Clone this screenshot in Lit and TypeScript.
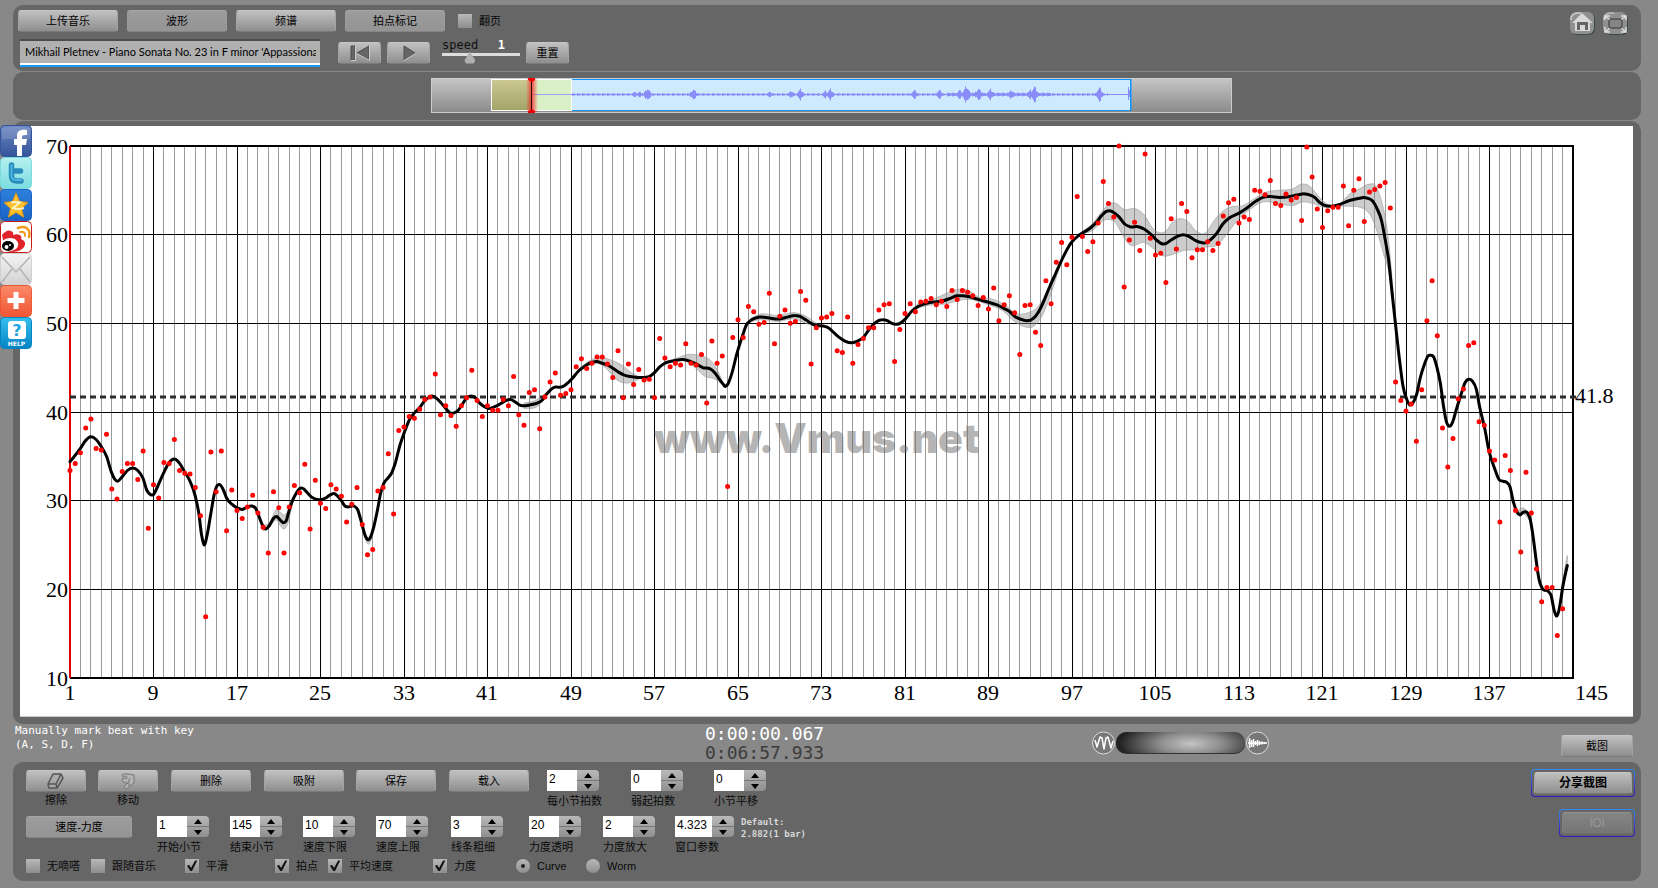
import { LitElement, html, svg, css, nothing } from "lit";
import { customElement, property, state } from "lit/decorators.js";
import { classMap } from "lit/directives/class-map.js";

// Tempo of every half bar, in tenths of BPM.
const BEATS = [
  334, 342, 354, 382, 392, 359, 357, 375, 313, 302, 333, 342, 342, 324, 356, 269, 318, 303, 343, 342,
  369, 334, 331, 330, 315, 283, 169, 355, 310, 356, 266, 312, 289, 280, 293, 306, 286, 270, 241, 310,
  292, 241, 293, 317, 309, 341, 268, 323, 297, 291, 318, 313, 305, 276, 296, 315, 273, 239, 245, 311,
  315, 353, 285, 379, 383, 395, 393, 403, 414, 417, 443, 397, 407, 396, 384, 407, 416, 447, 413, 395,
  407, 402, 402, 414, 407, 440, 397, 385, 422, 425, 381, 417, 434, 444, 419, 421, 425, 451, 460, 449,
  455, 462, 462, 454, 439, 469, 416, 454, 431, 448, 436, 437, 416, 483, 461, 451, 455, 453, 477, 455,
  453, 465, 410, 480, 455, 463, 316, 484, 504, 484, 519, 513, 499, 501, 534, 477, 508, 515, 500, 502,
  536, 526, 454, 495, 506, 507, 511, 469, 467, 507, 455, 476, 483, 495, 495, 515, 521, 522, 457, 493,
  511, 522, 513, 524, 525, 528, 521, 525, 519, 537, 527, 537, 535, 531, 520, 529, 516, 540, 503, 521,
  531, 512, 465, 520, 521, 490, 475, 548, 522, 569, 591, 566, 597, 643, 598, 581, 592, 613, 660, 635,
  620, 700, 541, 594, 614, 582, 691, 596, 577, 579, 546, 618, 584, 635, 626, 574, 583, 583, 592, 582,
  590, 621, 636, 640, 613, 620, 617, 650, 649, 645, 661, 635, 633, 646, 639, 642, 616, 699, 665, 629,
  608, 627, 631, 631, 655, 610, 650, 663, 615, 648, 651, 655, 659, 630, 434, 413, 401, 409, 367, 425,
  503, 548, 486, 382, 338, 370, 415, 426, 475, 478, 389, 385, 356, 346, 276, 351, 334, 289, 242, 332,
  286, 223, 186, 202, 202, 148, 178,
];

type Pt = [number, number];
const pairs = (s: string): Pt[] => s.trim().split(/\s+/).map((p) => p.split(",").map(Number) as Pt);

// Smoothed tempo: half-bar index, BPM.
const CURVE = pairs(`
0,34.4 2,35.9 3,36.8 4,37.2 5,36.9 6,36.1 7,35 8,33.1 8.6,32.4 9.1,32.2 10,32.7 11,33.4 12,33.7 13,33.4 14,32.5
14.7,31.2 15.2,30.8 16,30.7 17,31.9 18,33.2 19,34.3 20,34.7 21,34.2 22,33.2 23,32.2 24,30.5 24.7,28.5 25.2,26.2
25.7,25 26.2,25.9 27,28.6 27.6,30.6 28.1,31.6 28.7,31.8 29.4,31.2 30,30.3 31,29.6 32,29.2 33,29 34,29.3 34.8,29.4
35.6,29.1 36.1,28.4 37,27.1 37.5,26.8 38.2,27.2 39,28 39.6,28.2 40.3,27.8 40.9,27.5 41.4,27.7 42,28.9 42.5,29.8
43.2,30.7 43.9,31.3 44.6,31.4 45.3,31 46.3,30.4 48,30.1 49,30.3 50,30.7 50.6,30.8 51.3,30.5 52,30 52.7,29.4
53.2,29.3 54.4,29.4 55.1,29 56,27.2 56.6,26 57.2,25.6 57.6,25.9 58.1,26.8 59,29.2 59.5,30.8 60.1,31.9 61,32.6
61.6,33.1 62.4,34.4 63.2,36.2 64.2,37.9 65.1,39.2 66,39.9 67,40.5 68,41.3 69,41.7 69.4,41.8 70.1,41.6 71,41.1
72,40.4 72.8,39.9 73.6,39.9 74.4,40.2 75.2,40.9 76,41.6 76.8,41.8 77.7,41.6 78.5,41 79.4,40.6 80.1,40.4 81.4,40.6
82.4,40.9 83.5,41.3 84.5,41.4 85.4,41.1 86.1,40.8 86.8,40.7 88.1,40.8 89.5,41 90.4,41.3 91.3,42 92.1,42.5
92.9,42.8 93.9,42.8 94.8,43 95.6,43.4 96.4,43.9 97.4,44.6 98.5,45.1 99.6,45.5 100.9,45.7 102,45.5 103,45.3
104.1,44.9 105.1,44.5 106.1,44.2 107.3,44 108.7,43.9 110.2,43.9 111,44 112.1,44.5 113,45.1 114,45.5 115.9,45.8
117.8,45.9 118.9,45.7 120,45.4 121.3,45 122.6,44.9 123.6,44.4 124.3,43.8 125.2,43.1 125.5,42.9 126,43.1
126.8,44.3 127.7,46.4 128.8,48.5 129.6,49.8 130.6,50.4 132,50.7 134,50.6 135.7,50.5 137.4,50.7 138.9,50.9
139.8,50.8 141,50.4 142,50 142.7,49.8 144.3,49.7 145.3,49.5 146.1,49.1 147.2,48.5 148.5,48 149.9,47.8 150.9,48
152,48.4 153.1,49.3 154,49.9 154.9,50.3 155.7,50.4 156.6,50.3 157.5,50 158.5,49.9 159.3,50.1 160.1,50.5
161.2,51.3 162.5,51.9 163.8,52.2 165.4,52.4 167,52.5 168.6,52.8 169.9,53.1 171.1,53.1 172.4,53 174,52.7
175.9,52.4 177.5,52.1 178.9,51.7 180.1,51.3 181,50.8 182,50.5 183.3,50.3 184.2,50.4 185,50.8 185.8,51.5
186.8,52.8 187.7,54.1 188.7,55.4 190,57.1 191.1,58.4 192,59.2 193.5,60 195.4,60.7 196.7,61.4 197.6,62.1
198.5,62.6 199.2,62.7 200,62.5 201,62 202.1,61.2 203.1,60.9 204.7,60.9 205.9,60.6 207,60.1 208.2,59.4 209.1,59
210,59 211,59.4 212.2,59.8 213.3,60 214.4,59.8 215.5,59.4 216.8,59.1 217.8,59.1 218.7,59.5 219.8,60.2
220.9,61.2 222.2,61.9 223.9,62.4 225.7,63.1 227.3,63.8 228.6,64.2 229.8,64.3 231.8,64.2 233.7,64.3 235.3,64.5
236.6,64.6 237.5,64.5 238.5,64.2 239.5,63.6 240.4,63.3 241.7,63.2 243.3,63.4 244.9,63.8 247.1,64.1 247.8,64.2
248.7,64.1 249.6,63.8 250.4,63 251.3,61.6 252,59.5 252.7,57 253.3,53.6 254,49.8 254.8,45.7 255.4,43 256.1,41.5
256.7,40.8 257.3,41 258,41.9 258.7,43.8 259.6,45.5 260.2,46.3 260.7,46.4 261.3,46.2 261.9,45.1 262.6,43.2
263.2,40.6 263.8,38.8 264.3,38.4 264.9,38.8 265.6,40.2 266.5,41.9 267.3,43.3 268.1,43.7 268.7,43.5 269.5,42.5
270.1,40.6 271.1,38.1 271.9,35.6 273,33.6 273.8,32.4 274.6,32.2 275.2,32.1 275.9,31.6 276.6,29.8 277.3,28.7
277.8,28.4 278.5,28.7 279.3,28.6 279.8,27.9 280.3,26.2 281,23 281.5,21.1 282.1,20.1 283.2,19.8 283.8,19.3
284.4,17.6 284.9,17 285.3,17.6 286.1,20.5 286.9,22.7`);

// Dynamics bands: upper edge and lower edge, both left to right.
const BANDS: [Pt[], Pt[]][] = [
  ["37,27.2 38.2,27.5 39.6,29 40.3,28.7 40.9,28.4 41.5,28.6 42.5,30", "37,26.6 38.2,27 39.6,27.8 40.3,27.2 40.9,26.8 41.5,27.1 42.5,29.2"],
  ["56,27.4 57.2,25.8 58.4,27.8", "56,26.8 57.2,25.1 58.4,27"],
  ["87,41 89.5,41.4 91.3,42.2", "87,40.4 89.5,40.6 91.3,41.7"],
  ["97.4,44.8 99.6,45.8 101.5,46.2 103.5,45.9 105.4,45.4 107.9,44.3 109.5,43.9", "97.4,44.5 99.6,45.3 101.5,45.4 103.1,44.7 104.4,43.8 106,43.3 107.9,43.4 109.5,43.9"],
  ["114,45.7 115.9,46 118.5,46.5 121,46.3 122.6,45.9 123.9,44.9 125.2,43.2", "114,45.4 118.1,45.7 120,44.9 121.7,44 123.2,43.8 124.2,43.5 125.2,43"],
  ["130.6,50.6 132,51 135.7,50.9 138.9,51.2 141,50.8 143,50", "130.6,50.2 132,50.4 135.7,50.2 138.9,50.5 141,50 143,49.6"],
  ["161,51.4 162.5,52.2 165.4,52.7 167.6,53.3 169.9,53.8 171.8,53.8 174,53 176.9,52.7 179.1,52.1 181.4,51.1 183.6,51.2 185.2,51.7 186.5,52.8 188,54.7 190,57.2", "161,51.2 162.5,51.7 165.4,52.1 168,52.2 170.5,52.6 172.4,52.7 175.9,52.1 178.8,51.4 181,50.2 183,49.6 184.5,49.6 185.8,50.4 187.1,51.9 188.4,54.1 190,57"],
  ["192,59.3 193.5,60.1 196,61.3 198,62.8 199.2,63.5 200.5,63.5 201.8,62.9 204.3,62.9 205.9,62.2 207.5,60.7 209.1,60.2 210,60.4 211.4,61.5 212.8,61.8 214.2,61.5 215.8,60.4 217.8,60.3 219,61.4 220.6,62.5 222.2,63.1 224.8,63.3 227.3,64.2 229.2,64.8 231.5,65 234.4,65.2 236,65.7 237.5,65.5 239,64.5 240.7,63.5 243.3,63.5 245.2,64.6 247.2,65.2 249,65.7 250.2,65.5 251.1,64.2 251.9,62.3 252.7,59.1 253.6,53.1", "192,59.1 193.5,59.9 196,60.5 198,61.6 199.2,61.7 200.4,61.3 201.8,59.8 203,58.9 205.9,59.1 207.5,58.5 209.5,57.6 211.4,57.8 213.3,58.2 215.8,58.3 217.8,58.6 219.7,58.8 221.6,60 223.5,61.5 226,62.8 228.6,63.7 231.5,63.5 234.4,63.3 236.3,63.7 238.2,63.5 240.1,63.1 243.3,63.2 245.2,63.2 247.1,63.1 248,62.9 249.7,61.6 250.9,59.5 251.9,57.4 252.6,56.1 253.6,51.9"],
  ["277.3,28.8 278.5,29.2 279.8,28.3", "277.3,28.4 278.5,28.5 279.8,27.7"],
  ["285.3,17.7 286.1,21.2 286.9,23.8", "285.3,17.4 286.1,20 286.9,22.4"],
].map(([u, l]) => [pairs(u), pairs(l)] as [Pt[], Pt[]]);

const PLOT = { left: 50, top: 21, right: 1553, bottom: 553, minBar: 1, maxBar: 145, min: 10, max: 70 };
const barX = (bar: number) => PLOT.left + ((bar - PLOT.minBar) / (PLOT.maxBar - PLOT.minBar)) * (PLOT.right - PLOT.left);
const tempoY = (v: number) => PLOT.bottom - ((v - PLOT.min) / (PLOT.max - PLOT.min)) * (PLOT.bottom - PLOT.top);
const toXY = ([k, v]: Pt): Pt => [barX(1 + k / 2), tempoY(v)];

/** Hermite spline through points of monotone x, as bezier segments. */
function spline(points: Pt[], start = "M"): string {
  const n = (v: number) => v.toFixed(1);
  const last = points.length - 1;
  const slope = points.map((_, i) => {
    const a = points[Math.max(0, i - 1)];
    const b = points[i];
    const c = points[Math.min(last, i + 1)];
    if (i === 0 || i === last) return (c[1] - a[1]) / (c[0] - a[0]);
    const h0 = b[0] - a[0];
    const h1 = c[0] - b[0];
    return (((b[1] - a[1]) / h0) * h1 + ((c[1] - b[1]) / h1) * h0) / (h0 + h1);
  });
  let d = `${start}${n(points[0][0])} ${n(points[0][1])}`;
  for (let i = 0; i < last; i++) {
    const [x0, y0] = points[i];
    const [x1, y1] = points[i + 1];
    const h = (x1 - x0) / 3;
    d += `C${n(x0 + h)} ${n(y0 + slope[i] * h)} ${n(x1 - h)} ${n(y1 - slope[i + 1] * h)} ${n(x1)} ${n(y1)}`;
  }
  return d;
}

@customElement("tempo-chart")
export class TempoChart extends LitElement {
  static styles = css`
    :host { display: block; background: #fff; border-bottom: 1px solid #ccc; box-sizing: border-box; }
    svg { display: block; width: 100%; height: auto; }
    .minor { stroke: #999; stroke-width: 1; }
    .major { stroke: #000; stroke-width: 1; }
    .frame { stroke: #000; stroke-width: 2; }
    .cursor { stroke: #e00000; stroke-width: 2; }
    .grid { shape-rendering: crispEdges; }
    .axis { font: 22px "Liberation Serif", "Times New Roman", serif; fill: #000; }
    .mark { font: 900 41px Inter, "DejaVu Sans", sans-serif; fill: #6b6b6b; fill-opacity: 0.5; }
    .band { fill: #888; fill-opacity: 0.42; stroke: #999; stroke-width: 1; stroke-opacity: 0.6; }
    .curve { fill: none; stroke: #000; stroke-width: 3; stroke-linejoin: round; stroke-linecap: round; }
    .mean { stroke: #2c2c2c; stroke-width: 3; stroke-dasharray: 6 4; }
    .beat { fill: #b44; stroke: #f00; stroke-width: 2; }
  `;

  @property({ type: Number }) average = 41.8;

  render() {
    const bars = Array.from({ length: 145 }, (_, i) => i + 1);
    const levels = [70, 60, 50, 40, 30, 20, 10];
    const meanY = tempoY(this.average) + 1;
    const px = (v: number) => Math.floor(v) + 0.5;
    return html`
      <svg viewBox="0 1 1613 590" role="img" aria-label="Tempo by bar">
        <g class="grid">
          ${bars.filter((b) => (b - 1) % 8).map((b) => svg`<line class="minor" x1=${px(barX(b))} x2=${px(barX(b))} y1="21" y2="553"></line>`)}
          ${bars.filter((b) => b > 1 && b < 145 && (b - 1) % 8 === 0).map((b) => svg`<line class="major" x1=${px(barX(b))} x2=${px(barX(b))} y1="21" y2="553"></line>`)}
          ${levels.slice(1, -1).map((v) => svg`<line class="major" x1="50" x2="1553" y1=${px(tempoY(v))} y2=${px(tempoY(v))}></line>`)}
          <line class="frame" x1="50" x2="1554" y1="21" y2="21"></line>
          <line class="frame" x1="50" x2="1554" y1="553" y2="553"></line>
          <line class="frame" x1="1553" x2="1553" y1="20" y2="554"></line>
          <line class="cursor" x1="50" x2="50" y1="21" y2="553"></line>
        </g>
        <text class="mark" x="634" y="328">www.Vmus.net</text>
        ${BANDS.map(([up, low]) => svg`<path class="band" d=${spline(up.map(toXY)) + spline([...low].reverse().map(toXY), "L") + "Z"}></path>`)}
        <line class="mean" x1="50" x2="1556" y1=${meanY} y2=${meanY}></line>
        <path class="curve" d=${spline(CURVE.map(toXY))}></path>
        ${BEATS.map((v, k) => svg`<circle class="beat" cx=${barX(1 + k / 2).toFixed(1)} cy=${tempoY(v / 10).toFixed(1)} r="1.5"></circle>`)}
        ${levels.map((v) => svg`<text class="axis" text-anchor="end" x="48" y=${Math.floor(tempoY(v)) + 8}>${v}</text>`)}
        ${bars.filter((b) => b < 145 && (b - 1) % 8 === 0).map((b) => svg`<text class="axis" text-anchor="middle" x=${Math.floor(barX(b))} y="575">${b}</text>`)}
        <text class="axis" x="1555" y="575">145</text>
        <text class="axis" x="1555" y="278">${this.average}</text>
      </svg>
    `;
  }
}

@customElement("wave-overview")
export class WaveOverview extends LitElement {
  static styles = css`
    :host { display: block; width: 801px; }
    svg { display: block; width: 100%; height: auto; }
  `;

  private wave(): string {
    const bursts: Pt[] = [
      [203, 3], [208, 3], [216, 7], [262, 6], [338, 3], [360, 4], [369, 6], [394, 4], [399, 6], [483, 5],
      [508, 5], [528, 5], [535, 10], [547, 7], [559, 6], [580, 5], [599, 5], [603, 9], [668, 8],
    ];
    let d = "";
    for (let x = 102; x < 697; x++) {
      let h = x < 140 ? 0.4 : 0.5 + ((x * 7919) % 5) / 5 + (x > 515 && x < 620 ? 0.6 : 0);
      if (x > 676) h = 0.5;
      for (const [c, a] of bursts) h = Math.max(h, a * (1 - Math.abs(x - c) / 5) * (0.6 + ((x * 31) % 5) / 10));
      d += `M${x + 0.5} ${(16.5 - h).toFixed(1)}V${(16.5 + h).toFixed(1)}`;
    }
    return d + "M697.5 9V22M698.5 12V19";
  }

  render() {
    return html`
      <svg viewBox="0 0 801 35" role="img" aria-label="Waveform overview">
        <defs>
          <linearGradient id="g" x2="0" y2="1"><stop stop-color="#c6c6c6"></stop><stop offset="1" stop-color="#8a8a8a"></stop></linearGradient>
          <linearGradient id="o" x2="0" y2="1"><stop stop-color="#cbc894"></stop><stop offset="1" stop-color="#a4a368"></stop></linearGradient>
          <linearGradient id="r"><stop stop-color="#f00" stop-opacity="0"></stop><stop offset=".5" stop-color="#f00" stop-opacity=".65"></stop><stop offset="1" stop-color="#f00" stop-opacity="0"></stop></linearGradient>
        </defs>
        <rect x=".5" y=".5" width="800" height="34" fill="url(#g)" stroke="#ccc"></rect>
        <rect x="138" y="1.5" width="562" height="31" fill="#cdeafe" stroke="#1096f8"></rect>
        <path d="M699.500 1v32" stroke="#1096f8"></path>
        <rect x="60" y="1" width="81" height="32" fill="#fff"></rect>
        <rect x="61" y="2" width="40" height="30" fill="url(#o)"></rect>
        <rect x="101" y="2" width="39" height="30" fill="#d9efc6"></rect>
        <path d=${this.wave()} stroke="#8a8cf8"></path>
        <rect x="95" y="1" width="12" height="33" fill="url(#r)"></rect>
        <rect x="100" y="0" width="1" height="35" fill="#300"></rect>
        <path d="M97 0h7v2l-3 2-4-2zM97 35h7v-2l-3-2-4 2z" fill="#f00000"></path>
      </svg>
    `;
  }
}

@customElement("number-stepper")
export class NumberStepper extends LitElement {
  static styles = css`
    :host { display: block; }
    .box { display: flex; height: 21px; }
    input { width: 30px; height: 21px; box-sizing: border-box; border: 0; padding: 0 0 3px 2px; margin: 0; background: #fff; font: 12px "Liberation Sans", Arial, sans-serif; color: #000; border-radius: 0; }
    .wide input { width: 37px; }
    .arrows { display: flex; flex-direction: column; width: 22px; border-radius: 0 4px 4px 0; overflow: hidden; background: linear-gradient(#b9b9b9, #8f8f8f); }
    .arrows button { flex: 1; border: 0; padding: 0; background: none; display: grid; place-items: center; min-height: 0; }
    .arrows button + button { border-top: 1px solid #777; }
    svg { display: block; width: 8px; height: 5px; }
    label { display: block; margin-top: 2px; font: 11px/14px "Noto Sans CJK SC", sans-serif; color: #0a0a0a; white-space: nowrap; }
  `;

  @property() label = "";
  @property() value = "";
  @property({ type: Boolean }) wide = false;

  private step(by: number) {
    this.value = String(Number(this.value) + by);
  }

  render() {
    return html`
      <div class=${classMap({ box: true, wide: this.wide })}>
        <input id="v" inputmode="decimal" .value=${this.value} @change=${(e: Event) => (this.value = (e.target as HTMLInputElement).value)} />
        <div class="arrows">
          <button type="button" aria-label="+" @click=${() => this.step(1)}><svg viewBox="0 0 8 5"><path d="M0 5 4 0l4 5z"></path></svg></button>
          <button type="button" aria-label="-" @click=${() => this.step(-1)}><svg viewBox="0 0 8 5"><path d="M0 0h8L4 5z"></path></svg></button>
        </div>
      </div>
      <label for="v">${this.label}</label>
    `;
  }
}

const tile = (id: string, from: string, to: string, body: unknown) => html`
  <svg viewBox="0 0 32 32">
    <defs><linearGradient id=${id} x2="0" y2="1"><stop stop-color=${from}></stop><stop offset="1" stop-color=${to}></stop></linearGradient></defs>
    <rect x=".5" y=".5" width="31" height="31" rx="4" fill="url(#${id})" stroke=${to}></rect>
    ${body}
  </svg>
`;

const SOCIAL = [
  { name: "Facebook", icon: tile("fb", "#6d87c0", "#33549a", svg`<path d="M2 3q14-3 28 0v11H2z" fill="#fff" opacity=".12"></path><path d="M17 31V20h-3v-6h3v-3c0-5 3-7 10-6v5c-4-.4-5 .3-5 2v2h5l-1 6h-4v11z" fill="#fff"></path>`) },
  { name: "Twitter", icon: tile("tw", "#b6f0ef", "#7bdcdf", svg`<path d="M11.500 8v11q0 5 5.500 5h4M11.500 14h9" fill="none" stroke="#2a8cbc" stroke-width="5.500" stroke-linecap="round"></path><path d="M11.500 8v11q0 4 5.500 4h4" fill="none" stroke="#4db4dd" stroke-width="2" stroke-linecap="round"></path>`) },
  { name: "Qzone", icon: tile("qz", "#2e80dd", "#1a62c4", svg`<path d="m16 4 3.500 8.500 8.500 1-6.500 6 2 8.500-7.500-4.500-7.500 4.500 2-8.500-6.500-6 8.500-1z" fill="#fbc02a" stroke="#e9950c"></path><path d="M11 13.500q5-1 9 0l-7 5.500q5 2 11 0" fill="none" stroke="#fff4c8" stroke-width="2"></path>`) },
  { name: "Weibo", icon: html`
    <svg viewBox="0 0 32 32">
      <rect x=".5" y=".5" width="31" height="31" rx="4" fill="#fff" stroke="#c91a1a"></rect>
      <path d="M2 14q5-6 9-4 3 1 2 4 6-2 8 1 1 2 0 3 5 2 4 6-2 6-12 7-5 0-8-2z" fill="#e0222a"></path>
      <path d="M2 20q6-5 13-2 6 5 1 10-7 4-14 1z" fill="#fff"></path>
      <ellipse cx="8" cy="25" rx="6" ry="5" fill="#000"></ellipse><circle cx="6.500" cy="26" r="2" fill="#fff"></circle><circle cx="10" cy="24" r="1" fill="#fff"></circle>
      <path d="M18 7q8-3 11 3 1 3 0 6" fill="none" stroke="#f49a1c" stroke-width="2.500" stroke-linecap="round"></path>
      <path d="M20 11q4-1 5 2v2" fill="none" stroke="#f49a1c" stroke-width="2" stroke-linecap="round"></path>
    </svg>` },
  { name: "Email", icon: tile("em", "#f4f4f4", "#d2d2d2", svg`<path d="M2 4l14 15L30 4M2 29l10-13M30 29 20 16" fill="none" stroke="#b4b4b4" stroke-width="1.500"></path>`) },
  { name: "Share", icon: tile("sh", "#fb8a68", "#ef5634", svg`<path d="M16 7v17M7.500 15.500h17" stroke="#fff" stroke-width="5"></path>`) },
  { name: "Help", icon: tile("hp", "#35c0ee", "#0583c4", svg`<rect x="8" y="4" width="18" height="18" rx="3" fill="#fff"></rect><text x="17" y="19" text-anchor="middle" font-family="DejaVu Sans, sans-serif" font-weight="700" font-size="16" fill="#1aa5dc">?</text><text x="16.500" y="29" text-anchor="middle" font-family="DejaVu Sans, sans-serif" font-weight="700" font-size="6" fill="#fff">HELP</text>`) },
];

@customElement("app-root")
export class AppRoot extends LitElement {
  static styles = css`
    :host { display: block; min-height: 100vh; box-sizing: border-box; padding: 5px 17px 7px 13px; background: #888; color: #0a0a0a; font: 11px/14px "Liberation Sans", "Noto Sans CJK SC", Arial, sans-serif; }
    .panel { background: #666; border-radius: 10px; margin-bottom: 1px; box-sizing: border-box; }
    .panel.chart { margin-bottom: 0; }
    button { font: 11px/14px "Liberation Sans", "Noto Sans CJK SC", sans-serif; color: #000; border: 1px solid; border-color: #c6c6c6 #a2a2a2 #7a7a7a; border-radius: 3px; padding: 0; height: 22px; background: linear-gradient(#c0c0c0, #8e8e8e); display: inline-flex; align-items: center; justify-content: center; white-space: nowrap; }
    button.on { background: linear-gradient(#9c9c9c, #949494); border-color: #a6a6a6 #9c9c9c #858585; }
    label { white-space: nowrap; }

    .top { height: 66px; padding: 5px 12px 0 5px; display: flex; justify-content: space-between; }
    .row { display: flex; align-items: center; }
    .modes { gap: 9px; height: 22px; }
    .modes button { width: 100px; }
    .check { display: flex; align-items: center; gap: 7px; }
    .modes .check { margin-left: 4px; }
    input[type="checkbox"], input[type="radio"] { appearance: none; width: 14px; height: 14px; margin: 0; flex: none; background: linear-gradient(#b8b8b8, #8e8e8e); display: grid; place-items: center; }
    input[type="radio"] { border-radius: 50%; }
    input[type="checkbox"]:checked::before { content: ""; width: 12px; height: 12px; background: #111; clip-path: polygon(8% 48%, 26% 42%, 42% 66%, 76% 4%, 94% 4%, 50% 92%, 36% 92%); }
    input[type="radio"]:checked::before { content: ""; width: 4px; height: 4px; border-radius: 50%; background: #222; }

    .player { margin-top: 6px; height: 30px; padding-left: 2px; }
    .title { width: 300px; height: 28px; box-sizing: border-box; padding: 0 4px 3px 5px; border: 0; border-top: 2px solid #4c4c4c; border-bottom: 2px solid #1597f2; box-shadow: inset 0 -2px #fff; background: #b0b0b0; font: 11px Lato, "Liberation Sans", Arial, sans-serif; color: #000; }
    .player button { width: 43px; }
    .player .back { margin-left: 18px; }
    .player .play { margin-left: 6px; }
    .player button svg { width: 24px; height: 18px; }
    .speed { width: 78px; margin: 0 6px 4px 12px; }
    .speed .names { display: flex; justify-content: space-between; padding-right: 15px; font: 12px/13px "DejaVu Sans Mono", monospace; color: #111; }
    .speed output { color: #fff; font-weight: 700; }
    input[type="range"] { appearance: none; display: block; width: 100%; height: 12px; margin: 0; background: linear-gradient(#ddd, #ddd) 0 1px / 100% 3px no-repeat; }
    input[type="range"]::-webkit-slider-thumb { appearance: none; width: 11px; height: 12px; background: #b0b0b0; clip-path: polygon(50% 0, 100% 75%, 85% 100%, 15% 100%, 0 75%); }
    .corner { display: flex; gap: 6px; padding-top: 1px; }
    .corner button { width: 27px; height: 25px; border: 0; background: none; }
    .corner svg { width: 27px; height: 25px; }

    .overview { height: 48px; padding: 6px 0 0 8px; display: flex; justify-content: center; align-items: flex-start; }
    .chart { position: relative; padding: 5px 8px 7px 7px; }
    .social { position: absolute; left: -13px; top: 4px; width: 32px; }
    .social a, .social svg { display: block; width: 32px; height: 32px; }

    .status { display: grid; grid-template-columns: 690fr 387fr 541fr; height: 38px; padding: 0 8px 0 2px; align-items: center; }
    .hint { font: 11px/14px "DejaVu Sans Mono", monospace; color: #fff; margin: 0; align-self: start; }
    .time { font: 18px/19px "DejaVu Sans Mono", monospace; color: #fff; align-self: start; }
    .time .total { color: #3c3c3c; }
    .zoomer { display: flex; align-items: center; justify-content: space-between; }
    .zoomer button { width: 72px; margin-top: 5px; }
    .wheel { display: flex; align-items: center; gap: 1px; }
    .wheel svg { width: 23px; height: 24px; display: block; }
    .drum { width: 129px; height: 22px; box-sizing: border-box; border-radius: 10px; border-bottom: 1px solid #333; background: radial-gradient(ellipse 72px 24px at 58% 56%, #c4c4c4, #8a8a8a 45%, #484848 80%, #222); }

    .tools { padding: 8px 6px 0 13px; height: 119px; display: flex; justify-content: space-between; margin: 0; }
    .line { display: grid; align-items: start; }
    .one { grid-template-columns: 72px 73px 93px 92px 93px 98px 84px 83px 60px; height: 46px; }
    .two { grid-template-columns: 131px 73px 73px 73px 75px 78px 74px 72px 66px 80px; height: 43px; }
    .three { grid-template-columns: 65px 94px 90px 53px 105px 83px 70px 60px; height: 15px; }
    .line button { width: 80px; }
    .tool { display: flex; flex-direction: column; width: 60px; align-items: center; gap: 1px; }
    .line .tool button { width: 60px; }
    .tool svg { width: 20px; height: 18px; }
    .line .view { width: 106px; }
    .default { margin: 0; font: 700 9px/12px "DejaVu Sans Mono", monospace; color: #d8d8d8; white-space: nowrap; }
    .share { display: flex; flex-direction: column; align-items: flex-end; gap: 13px; }
    .share .ring { padding: 2px; border-radius: 4px; background: linear-gradient(#666, #666) padding-box, linear-gradient(#2f8cf0, #3a10c0) border-box; border: 1px solid transparent; display: flex; margin-top: -1px; }
    .share button { width: 98px; height: 22px; font-weight: 700; font-size: 12px; }
    .share button:disabled { width: 70px; font-weight: 400; color: #989898; background: linear-gradient(#858585, #757575); border-color: #909090 #808080 #707070; }
  `;

  @state() private mode = 1;
  @state() private speed = 1;

  private tick(id: string, text: string, checked = false) {
    return html`<div class="check"><input type="checkbox" id=${id} ?checked=${checked} /><label for=${id}>${text}</label></div>`;
  }

  private option(id: string, text: string, checked = false) {
    return html`<div class="check"><input type="radio" name="style" id=${id} ?checked=${checked} /><label for=${id}>${text}</label></div>`;
  }

  private stepper(label: string, value: string, wide = false) {
    return html`<number-stepper label=${label} value=${value} ?wide=${wide}></number-stepper>`;
  }

  render() {
    return html`
      <header class="panel top">
        <div>
          <div class="row modes">
            ${["上传音乐", "波形", "频谱", "拍点标记"].map(
              (t, i) => html`<button type="button" class=${i % 2 ? "on" : nothing} @click=${() => (this.mode = i)}>${t}</button>`
            )}
            ${this.tick("page", "翻页")}
          </div>
          <div class="row player">
            <input class="title" type="text" aria-label="Recording" value="Mikhail Pletnev - Piano Sonata No. 23 in F minor 'Appassionat" />
            <button type="button" class="back" aria-label="Back to start"><svg viewBox="0 0 24 18"><path d="M3 2h4v14H3zM21 2v14L9 9z" fill="#666" stroke="#4c4c4c"></path><path d="M21.500 2v14.500L9 9.500M3 16.500h4.500V2" fill="none" stroke="#ccc"></path></svg></button>
            <button type="button" class="play" aria-label="Play"><svg viewBox="0 0 24 18"><path d="M7 2v14l11-7z" fill="#666" stroke="#4c4c4c"></path><path d="M7 16.500 18.500 9.500" stroke="#ccc"></path></svg></button>
            <div class="speed">
              <div class="names"><label for="speed">speed</label><output for="speed">${this.speed}</output></div>
              <input id="speed" type="range" min="0" max="3" step="0.1" .value=${String(this.speed)} @input=${(e: Event) => (this.speed = Number((e.target as HTMLInputElement).value))} />
            </div>
            <button type="button" @click=${() => (this.speed = 1)}>重置</button>
          </div>
        </div>
        <div class="corner">
          <button type="button" aria-label="Home"><svg viewBox="0 0 27 25"><rect x="2" y="2" width="24" height="22" rx="6" fill="#3c4a48"></rect><rect x="1" y="1" width="24" height="22" rx="6" fill="#909090"></rect><path d="M2 9q0-8 10-7" fill="none" stroke="#ccc" stroke-width="1.500"></path><path d="M13 2 3 12h3v8h15v-8h3z" fill="#d8d8d8"></path><path d="M8 11h11v8h-3v-5h-5v5H8z" fill="#666"></path></svg></button>
          <button type="button" aria-label="Full screen"><svg viewBox="0 0 27 25"><rect x="2" y="2" width="24" height="22" rx="6" fill="#3c4a48"></rect><rect x="1" y="1" width="24" height="22" rx="6" fill="#909090"></rect><path d="M2 9q0-8 10-7" fill="none" stroke="#bbb" stroke-width="1.500"></path><rect x="7" y="8" width="13" height="9" rx="2" fill="#858585" stroke="#333"></rect><path d="M3 9V5h5M3.500 5.500l4 3M24 9V5h-5M23.500 5.500l-4 3M3 16v5h5M3.500 20.500l4-3M24 16v5h-5M23.500 20.500l-4-3" fill="none" stroke="#ddd" stroke-width="1.500"></path></svg></button>
        </div>
      </header>

      <section class="panel overview"><wave-overview></wave-overview></section>

      <main class="panel chart">
        <tempo-chart></tempo-chart>
        <nav class="social">${SOCIAL.map((s) => html`<a href="#" aria-label=${s.name}>${s.icon}</a>`)}</nav>
      </main>

      <section class="status">
        <p class="hint">Manually mark beat with key<br />(A, S, D, F)</p>
        <div class="time"><div>0:00:00.067</div><div class="total">0:06:57.933</div></div>
        <div class="zoomer">
          <div class="wheel">
            <svg viewBox="0 0 23 24"><circle cx="11.500" cy="12" r="11" fill="#777" stroke="#ddd"></circle><path d="M3 9l2 7 3-10 2 1 2 11 2-11 2-1 3 11 2-7" fill="none" stroke="#fff" stroke-width="1.500" stroke-linejoin="round"></path></svg>
            <div class="drum"></div>
            <svg viewBox="0 0 23 24"><circle cx="11.500" cy="12" r="11" fill="#777" stroke="#ddd"></circle><path d="M2 12h19M3.500 7v10M5.500 9v7M7.500 8v8M9.500 10v4M11.500 9v6M13.500 10v4M16 10.500v3M18.500 11v2" stroke="#fff" stroke-width="1.500"></path></svg>
          </div>
          <button type="button">截图</button>
        </div>
      </section>

      <section class="panel tools">
        <div>
          <div class="line one">
            <div class="tool"><button type="button" id="erase" aria-labelledby="erase-t"><svg viewBox="0 0 20 18"><path d="M7 2h8l2 4-6 10H3l-1-4zM2 12h8l5-10M10 12l1 4" fill="#aaa" stroke="#555" stroke-width="1.500" stroke-linejoin="round"></path></svg></button><label id="erase-t" for="erase">擦除</label></div>
            <div class="tool"><button type="button" id="move" aria-labelledby="move-t"><svg viewBox="0 0 20 18"><path d="M4 3q2-2 6-1l6 1v8l-4 3q-1-3-4-3-4-1-4-4 2-2 4 0 2-3-1-3-3 2-3-1zM12 6q-1 4-5 8-2 3 0 3 3 0 5-4" fill="#b4b4b4" stroke="#777"></path></svg></button><label id="move-t" for="move">移动</label></div>
            ${["删除", "吸附", "保存", "载入"].map((t) => html`<button type="button">${t}</button>`)}
            ${this.stepper("每小节拍数", "2")} ${this.stepper("弱起拍数", "0")} ${this.stepper("小节平移", "0")}
          </div>
          <div class="line two">
            <button type="button" class="view on">速度-力度</button>
            ${this.stepper("开始小节", "1")} ${this.stepper("结束小节", "145")} ${this.stepper("速度下限", "10")}
            ${this.stepper("速度上限", "70")} ${this.stepper("线条粗细", "3")} ${this.stepper("力度透明", "20")}
            ${this.stepper("力度放大", "2")} ${this.stepper("窗口参数", "4.323", true)}
            <p class="default">Default:<br />2.882(1 bar)</p>
          </div>
          <div class="line three">
            ${this.tick("mute", "无嘀嗒")} ${this.tick("follow", "跟随音乐")} ${this.tick("smooth", "平滑", true)}
            ${this.tick("beats", "拍点", true)} ${this.tick("mean", "平均速度", true)} ${this.tick("force", "力度", true)}
            ${this.option("curve", "Curve", true)} ${this.option("worm", "Worm")}
          </div>
        </div>
        <div class="share">
          <div class="ring"><button type="button">分享截图</button></div>
          <div class="ring"><button type="button" disabled>lOl</button></div>
        </div>
      </section>
    `;
  }
}
